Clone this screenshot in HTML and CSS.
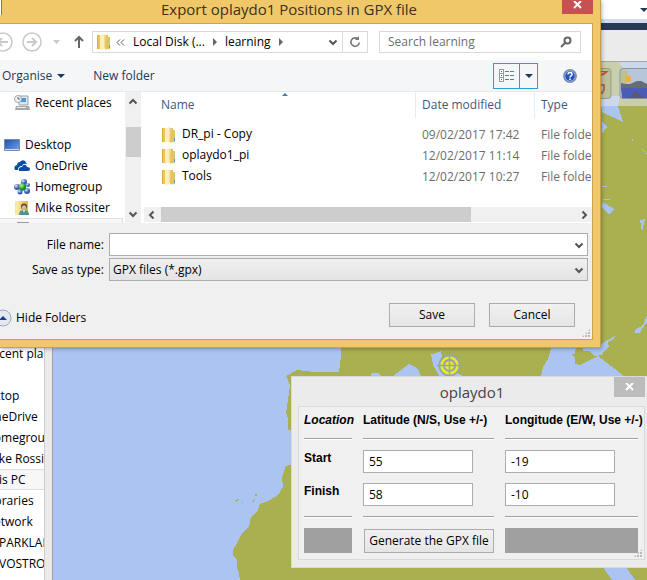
FILE: index.html
```
<!DOCTYPE html>
<html lang="en-GB">
<head>
<meta charset="utf-8">
<title>Export oplaydo1 Positions in GPX file</title>
<link rel="stylesheet" href="styles.css">
</head>
<body>
<svg class="defs" width="0" height="0" aria-hidden="true">
  <defs>
    <linearGradient id="gold" x1="0" x2="1"><stop offset="0" stop-color="#f6e39a"/><stop offset="1" stop-color="#d9b64c"/></linearGradient>
    <linearGradient id="screen" x1="0" x2="1" y2="1"><stop offset="0" stop-color="#1c4fae"/><stop offset="1" stop-color="#6fa5ea"/></linearGradient>
    <radialGradient id="ball" cx=".35" cy=".3"><stop offset="0" stop-color="#dfe8ff"/><stop offset="1" stop-color="#3355b5"/></radialGradient>
    <radialGradient id="green" cx=".35" cy=".3"><stop offset="0" stop-color="#b8f59a"/><stop offset="1" stop-color="#17902a"/></radialGradient>
    <symbol id="folder" viewBox="0 0 16 16">
      <path d="M1 1h6v14H1z" fill="#e4c75f"/><path d="M4 1l5-1v15l-5 1z" fill="#fbf0b8"/><path d="M8 1h4v13H8z" fill="url(#gold)"/><path d="M10 3h4v12l-5 .5z" fill="#e3c463"/><path d="M13 11h1v3h-1z" fill="#3fa0d8"/><path d="M1.500 1v14" stroke="#d6ad43"/>
    </symbol>
    <symbol id="chevron" viewBox="0 0 10 10"><path d="M1.500 3.500L5 7l3.500-3.500" fill="none" stroke="#555" stroke-width="2"/></symbol>
  </defs>
</svg>

<main class="desktop">
  <svg class="map" viewBox="0 0 647 580" preserveAspectRatio="xMinYMin slice" role="img" aria-label="Chart" shape-rendering="crispEdges">
    <rect width="647" height="580" fill="#abc4f1"/>
    <g fill="#a9b050">
      <path d="M341 340V356L339 372H312L307 371 297 370 286 376 290 385 288 400 286 413 288 418V430H300V462L286 466 282 477 283 487 280 492 275 497 268 501 260 504 257 512 251 517 249 526 241 535 237 543 233 550V555L237 560V568L239 573 240 580H647V60H590V340Z"/>
      <path d="M234 500l5-1-3 3zM251 502l4-4-1 4zM255 494h2v2h-2zM242 502h1v1h-1z"/>
    </g>
    <g fill="#abc4f1">
      <path d="M371 376l1-3 6 0 4 3zM393 376l12-9 4-3 6 3 3 2 3 7zM431 354l5-1 5-2 1 5-1 3 4 6 19 12H440l-7-12z"/>
      <path d="M541 376l2-9 5-8 2-7 2-6h24l-1 8-4 0 4 3v7l5 1 18-9 26 20z"/>
      <path d="M583 348l18-4 14-8-1 3-6 3 1 5-4 3-3 5-7 1-6-5-6 0z"/>
      <path d="M600 96h20l-2 10 5 16-21-10zM602 121l5 6-5 7zM602 186h5v1h-5zM603 199h7v1h-7zM603 202l11 7-5 6-7-8zM640 220l5-1-3 13zM635 330l8-5 4-10v7l-5 7-2 4h-5zM642 150l5 5v-1l-5-5zM632 139h1v2h-1z"/>
      <path d="M603 567h23l9 13h-23z"/><path d="M617 60h30v28h-18l-2-15z"/>
    </g>
    <g shape-rendering="auto">
      <circle cx="449.500" cy="365.500" r="10" fill="none" stroke="#91a6ad" stroke-width="2"/>
      <circle cx="449.500" cy="365.500" r="8" fill="none" stroke="#f5e62c" stroke-width="2.500"/>
      <circle cx="449.500" cy="365.500" r="4.500" fill="#f5e62c"/><circle cx="449.500" cy="365.500" r="5.500" fill="none" stroke="#91a6ad" stroke-width="1.500"/>
      <path d="M437 365.500h25M449.500 353v25" stroke="#91a6ad" stroke-width="1.500"/>
    </g>
  </svg>

  <section class="app-chrome" aria-label="Chart toolbar">
    <div class="address-strip"><i class="tri-down"></i></div>
    <div class="navy-strip"></div>
    <div class="plain-strip"></div>
    <div class="chart-tools">
      <svg width="17" height="31" viewBox="0 0 17 31"><path d="M0 .5h13q3 0 3 3v24q0 3-3 3H0" fill="#bcc09a" stroke="#999d8c"/><path d="M0 3h14l-5 4-9 2z" fill="#c8512e"/><path d="M0 5l10-1-8 4z" fill="#f0c09a"/><path d="M0 17h9v5l-2 3H0" fill="none" stroke="#b5655c" stroke-width="2"/></svg>
      <svg width="28" height="31" viewBox="0 0 28 31"><path d="M28 .5H4q-3 0-3 3v24q0 3 3 3h24" fill="#b7c6d9" stroke="#8b91a0"/><path d="M2 2h6l2 9-4 7H2z" fill="#bec18f"/><circle cx="9" cy="11" r="3" fill="#f2b02c"/><path d="M2 15l5 1 4 0 7-3 4 0 6 3v6H2z" fill="#666c75"/><path d="M2 20h26v10H3z" fill="#4b5cb8"/><path d="M10 30l7-7 9 7z" fill="#58597a"/></svg>
    </div>
  </section>

  <section class="back-window" aria-label="Folders">
    <ul>
      <li>Recent places</li><li></li><li class="root">Desktop</li><li>OneDrive</li><li>Homegroup</li><li>Mike Rossiter</li><li class="selected">This PC</li><li>Libraries</li><li>Network</li><li class="host">PARKLANDS</li><li class="host">VOSTRO8200</li>
    </ul>
  </section>

  <section class="dialog" aria-labelledby="export-title">
    <header class="titlebar"><i class="app-icon"></i><h1 id="export-title">Export oplaydo1 Positions in GPX file</h1>
      <button class="close" aria-label="Close"><svg width="9" height="8" viewBox="0 0 9 8"><path d="M1 0l7 7M8 0L1 7" stroke="#fff" stroke-width="2"/></svg></button></header>
    <div class="client">
      <nav class="navbar">
        <svg class="history" width="88" height="22" viewBox="0 0 88 22" fill="none" stroke="#c9c9c9" stroke-width="1.500">
          <circle cx="3" cy="11" r="9"/><path d="M8 11H-1M2 7l-4 4 4 4" stroke-width="2"/><circle cx="32" cy="11" r="9"/><path d="M27 11h9M32 7l4 4-4 4" stroke-width="2"/><path d="M53 9h7l-3.500 4z" fill="#c9c9c9" stroke="none"/><path d="M79 17V6M75 10l4-4 4 4" stroke="#666" stroke-width="2"/>
        </svg>
        <div class="crumbs">
          <svg width="16" height="16"><use href="#folder"/></svg><svg class="more" width="9" height="7" viewBox="0 0 9 7"><path d="M4 .5l-3 3 3 3M8 .5l-3 3 3 3" fill="none" stroke="#555"/></svg>
          <a href="#disk">Local Disk (...</a><i class="tri-right"></i><a href="#learning">learning</a><i class="tri-right"></i>
          <button class="bare drop" aria-label="Previous locations"><svg width="10" height="10"><use href="#chevron"/></svg></button>
          <button class="bare refresh" aria-label="Refresh"><svg width="12" height="14" viewBox="0 0 12 14"><path d="M9 4a4.200 4.200 0 1 0 1.300 3.500" fill="none" stroke="#777" stroke-width="1.600"/><path d="M6 5h4V1z" fill="#777"/></svg></button>
        </div>
        <label class="search"><input type="text" placeholder="Search learning" aria-label="Search learning"><svg width="12" height="12" viewBox="0 0 12 12"><circle cx="7.500" cy="4.500" r="3" fill="none" stroke="#666" stroke-width="2"/><path d="M5 7L1 11" stroke="#666" stroke-width="2"/></svg></label>
      </nav>
      <div class="toolbar">
        <button class="bare organise">Organise<i class="tri-down"></i></button>
        <button class="bare">New folder</button>
        <div class="view">
          <button class="bare" aria-label="Details view"><svg width="16" height="14" viewBox="0 0 16 14" shape-rendering="crispEdges"><g fill="#fff" stroke="#8d9aab"><path d="M.5 .5h4v4h-4zM.5 4.500h4v4h-4zM.5 8.500h4v4h-4z"/></g><path d="M2 2h1v1H2zM2 10h1v1H2z" fill="#277"/><path d="M2 6h1v1H2z" fill="#e22"/><path d="M6 2.500h4M11 2.500h4M6 6.500h4M11 6.500h4M6 10.500h4M11 10.500h4" stroke="#6b7686"/></svg></button>
          <button class="bare" aria-label="More views"><i class="tri-down"></i></button>
        </div>
        <button class="bare help" aria-label="Help"><svg width="14" height="14" viewBox="0 0 14 14"><circle cx="7" cy="7" r="6.300" fill="#2451bd" stroke="#8590a4" stroke-width="1.200"/><circle cx="7" cy="7" r="5.200" fill="none" stroke="#b9caf0" stroke-width=".8"/><path d="M5 5.500q0-2 2-2t2 1.700q0 1-1 1.600T7 8.500" fill="none" stroke="#fff" stroke-width="1.500"/><path d="M6.200 9.600h1.600v1.500H6.200z" fill="#fff"/></svg></button>
      </div>
      <div class="panes">
        <ul class="tree">
          <li><svg width="16" height="16" viewBox="0 0 16 16"><path d="M5 1h9v9H5z" fill="#dfe6ec" stroke="#99a3ad"/><path d="M7 3h5v4H7z" fill="#4a9bd2"/><path d="M2 11h13l1 4H1z" fill="#a5a8ab"/><path d="M3 12h9v1H3z" fill="#eee"/><circle cx="4" cy="4" r="3.500" fill="#f4f6f8" stroke="#9aa6b4"/><path d="M4 2v2h2" stroke="#567" fill="none"/></svg>Recent places</li>
          <li></li>
          <li class="root"><svg width="16" height="16" viewBox="0 0 16 16"><path d="M.5 2.500h15v11H.5z" fill="url(#screen)" stroke="#7c8b9c"/><path d="M1 12h14v1H1z" fill="#cfdbe8"/></svg>Desktop</li>
          <li><svg width="16" height="16" viewBox="0 0 16 16" fill="#0f4ca5"><path d="M1 12Q-1 8 3 7q0-3 3-3 2-3 5-1l2 3q-4-1-5 2-4 0-4 4z"/><path d="M5 13q-1-4 3-4 1-3 4-2l1 2q3 0 3 2t-2 2z"/></svg>OneDrive</li>
          <li><svg width="16" height="16" viewBox="0 0 16 16"><circle cx="3" cy="8" r="3" fill="url(#ball)"/><circle cx="10" cy="3" r="3" fill="url(#ball)"/><circle cx="14" cy="6" r="2" fill="url(#ball)"/><circle cx="6" cy="13" r="2.500" fill="url(#ball)"/><circle cx="13" cy="12" r="3" fill="url(#ball)"/><circle cx="8.500" cy="8" r="3.800" fill="url(#green)"/></svg>Homegroup</li>
          <li><svg width="16" height="16" viewBox="0 0 16 16"><path d="M1 1h4v14H1z" fill="#f8eaa2"/><path d="M4 1h10v14H4z" fill="url(#gold)"/><circle cx="10" cy="6.500" r="3" fill="#5d4632"/><circle cx="10" cy="7.500" r="2.200" fill="#e2b596"/><path d="M5 15q0-5 5-5t5 5z" fill="#48968b"/><path d="M9 10h2l-1 3z" fill="#fff"/></svg>Mike Rossiter</li>
          <li class="selected"><svg width="16" height="16" viewBox="0 0 16 16"><path d="M3 1h12v9H3z" fill="#9b9b9b"/></svg></li>
        </ul>
        <div class="vscroll"><svg class="flip" width="10" height="10"><use href="#chevron"/></svg><i class="vthumb"></i><svg width="10" height="10"><use href="#chevron"/></svg></div>
        <div class="files">
          <i class="sort-mark"></i>
          <table>
            <colgroup><col class="c-name"><col class="c-date"><col></colgroup>
            <thead><tr><th>Name</th><th>Date modified</th><th>Type</th></tr></thead>
            <tbody>
              <tr><td><svg width="16" height="16"><use href="#folder"/></svg>DR_pi - Copy</td><td>09/02/2017 17:42</td><td>File folder</td></tr>
              <tr><td><svg width="16" height="16"><use href="#folder"/></svg>oplaydo1_pi</td><td>12/02/2017 11:14</td><td>File folder</td></tr>
              <tr><td><svg width="16" height="16"><use href="#folder"/></svg>Tools</td><td>12/02/2017 10:27</td><td>File folder</td></tr>
            </tbody>
          </table>
          <div class="hscroll"><svg class="left" width="10" height="10"><use href="#chevron"/></svg><i class="hthumb"></i><svg class="right" width="10" height="10"><use href="#chevron"/></svg></div>
        </div>
      </div>
      <form class="fields">
        <label for="fname">File name:</label>
        <div class="combo"><input id="fname" type="text"><svg width="10" height="10"><use href="#chevron"/></svg></div>
        <label for="ftype">Save as type:</label>
        <div class="combo grey"><select id="ftype"><option>GPX files (*.gpx)</option></select><svg width="10" height="10"><use href="#chevron"/></svg></div>
      </form>
      <footer class="actions">
        <button class="bare hide-folders"><svg width="12" height="18" viewBox="0 0 12 18"><circle cx="3" cy="9" r="8" fill="#e4e9f0" stroke="#9aa8c0"/><path d="M-1 11h8L3 7z" fill="#1f3c88"/></svg>Hide Folders</button>
        <button class="push">Save</button>
        <button class="push">Cancel</button>
      </footer>
      <i class="grip"></i>
    </div>
  </section>

  <section class="tool-window" aria-labelledby="tool-title">
    <header><h2 id="tool-title">oplaydo1</h2><button class="close" aria-label="Close oplaydo1"><svg width="9" height="8" viewBox="0 0 9 8"><path d="M1 0l7 7M8 0L1 7" stroke="#fff" stroke-width="2"/></svg></button></header>
    <form class="panel">
      <em>Location</em><b>Latitude (N/S, Use +/-)</b><b>Longitude (E/W, Use +/-)</b>
      <hr><hr><hr>
      <b class="row-name">Start</b><input type="text" value="55" aria-label="Start latitude"><input type="text" value="-19" aria-label="Start longitude">
      <b class="row-name">Finish</b><input type="text" value="58" aria-label="Finish latitude"><input type="text" value="-10" aria-label="Finish longitude">
      <hr><hr><hr>
      <span class="block"></span><button class="push" type="button">Generate the GPX file</button><span class="block"></span>
      <i class="grip"></i>
    </form>
  </section>
</main>
</body>
</html>
```
FILE: styles.css
```
* { box-sizing: border-box; }

body {
  margin: 0;
  font: 12px/16px "Open Sans", "Noto Sans", sans-serif;
  color: #000;
}

h1, h2, ul { margin: 0; padding: 0; font-weight: 400; list-style: none; }
button, input, select { font: inherit; color: inherit; margin: 0; border-radius: 0; }
input, select { min-width: 0; }
svg { flex: none; display: block; }
.defs { position: absolute; }
.bare { padding: 0; border: 0; background: none; }

.desktop { position: relative; height: 100vh; min-height: 580px; overflow: hidden; }
.map { position: absolute; inset: 0; width: 100%; height: 100%; }

.tri-down { border: 4px solid transparent; border-top-color: #1e395b; border-bottom: 0; }
.tri-right { border: 4px solid transparent; border-left-color: #666; border-right: 0; }

/* Strips of the chart plotter behind the dialogs */
.app-chrome { position: absolute; top: 0; left: 0; right: 0; }
.address-strip { display: flex; justify-content: flex-end; align-items: center; height: 19px; background: #fff; }
.address-strip .tri-down { margin-right: -1px; }
.navy-strip { height: 11px; border-top: 4px solid #d3daea; background: #293955; }
.plain-strip { height: 32px; background: #ebebeb; border-bottom: 1px solid #a6a6a6; }
.chart-tools { display: flex; justify-content: flex-end; gap: 7px; height: 44px; padding-top: 6px; background: rgba(225, 228, 232, .6); }

/* Window partly hidden on the left */
.back-window { position: absolute; top: 343px; left: 0; bottom: 0; width: 53px; background: #ebebeb; border-right: 1px solid #a0a0a0; overflow: hidden; }
.back-window ul { width: 45px; height: 100%; overflow: hidden; background: #fff; border-right: 1px solid #ccc; }
.back-window li { height: 21px; line-height: 21px; white-space: nowrap; text-indent: -15px; }
.back-window .root { text-indent: -27px; }
.back-window .host { text-indent: -1px; }
.back-window .selected { line-height: 19px; background: #f7f7f7; border: solid #dedede; border-width: 1px 0; }

/* Save dialog */
.dialog { position: absolute; top: 0; left: 0; right: 46px; padding: 0 7px 7px 0; background: #f0c869; border: solid #c99f4b; border-width: 0 1px 1px 0; box-shadow: 1px 1px 4px rgba(0, 0, 0, .3); }
.titlebar { display: flex; align-items: flex-start; height: 23px; }
.titlebar h1 { flex: 1; padding-left: 14px; font-size: 15px; line-height: 18px; text-align: center; color: #3b3220; }
.app-icon { width: 2px; height: 15px; background: #fff; border-right: 1px solid #777; }
.close { display: flex; justify-content: center; align-items: center; width: 31px; height: 14px; padding: 0 0 4px; border: 0; background: #c75050; }
.client { position: relative; background: #f0f0f0; border: solid #cda14d; border-width: 1px 1px 1px 0; overflow: hidden; }

.navbar { display: flex; align-items: center; gap: 11px; height: 36px; padding: 0 11px 0 0; background: #fff; }
.history { margin-right: -7px; }
.crumbs { flex: 1; display: flex; align-items: center; height: 22px; padding-left: 3px; border: 1px solid #d9d9d9; }
.crumbs a { color: #000; text-decoration: none; white-space: nowrap; }
.crumbs .more { margin: 0 8px 0 4px; }
.crumbs .tri-right { margin: 0 8px; }
.drop { margin-left: auto; padding-right: 4px; }
.refresh { display: flex; align-items: center; justify-content: center; align-self: stretch; width: 25px; border-left: 1px solid #d9d9d9; }
.search { display: flex; align-items: center; width: 202px; height: 22px; padding: 0 8px; border: 1px solid #d9d9d9; }
.search input { flex: 1; padding: 0; border: 0; outline: 0; }
.search input::placeholder { color: #6d6d6d; }

.toolbar { display: flex; align-items: center; height: 32px; padding: 0 15px 0 2px; color: #1e395b; background: #f5f6f7; border-bottom: 1px solid #e6e8ea; }
.organise { display: flex; align-items: center; gap: 5px; margin-right: 28px; }
.view { display: flex; height: 26px; margin: 0 25px 0 auto; border: 1px solid #2aa0d8; }
.view button { display: flex; align-items: center; justify-content: center; width: 25px; }
.view button + button { width: 18px; border-left: 1px solid #2aa0d8; }

.panes { display: flex; height: 131px; background: #fff; }
.tree { width: 125px; height: 131px; overflow: hidden; }
.tree li { display: flex; align-items: center; gap: 5px; height: 21px; padding-left: 14px; white-space: nowrap; }
.tree .root { padding-left: 4px; }
.tree .selected { margin-right: 2px; border: 1px solid #dedede; border-left: 0; background: #f7f7f7; }
.vscroll { display: flex; flex-direction: column; align-items: center; width: 16px; padding: 5px 0 4px; background: #f0f0f0; }
.vthumb { width: 15px; height: 30px; margin: 20px 0 auto; background: #cdcdcd; }
.flip { transform: rotate(180deg); }
.left { transform: rotate(90deg); }
.right { transform: rotate(-90deg); }

.files { flex: 1; min-width: 0; display: flex; flex-direction: column; position: relative; margin-left: 3px; }
.files table { width: 100%; border-spacing: 0; table-layout: fixed; }
.files th, .files td { height: 21px; padding: 0 0 0 6px; font-weight: 400; text-align: left; white-space: nowrap; overflow: hidden; color: #6d6d6d; }
.files th { height: 26px; color: #43577d; border-right: 1px solid #e3edf8; }
.files th:last-child { border: 0; }
.files th:first-child, .files td:first-child { padding-left: 17px; }
.files td:first-child { color: #000; }
.files tbody::before { content: ""; display: block; height: 6px; }
.files td svg { display: inline-block; margin-right: 5px; vertical-align: middle; }
.c-name { width: 272px; }
.c-date { width: 119px; }
.sort-mark { position: absolute; top: 1px; left: 138px; border: 3px solid transparent; border-bottom-color: #3b7fa5; border-top: 0; }
.hscroll { display: flex; align-items: center; height: 15px; margin-top: auto; margin-bottom: 1px; padding: 0 3px; background: #f0f0f0; }
.hthumb { width: 310px; height: 15px; margin: 0 auto 0 4px; background: #cdcdcd; }

.fields { display: grid; grid-template-columns: 104px 1fr; column-gap: 5px; row-gap: 2px; align-items: center; padding: 10px 4px 0 0; }
.fields label { text-align: right; }
.combo { position: relative; display: flex; height: 23px; border: 1px solid #abadb3; background: #fff; }
.combo.grey { background: linear-gradient(#f0f0f0, #e4e4e4); }
.combo input, .combo select { flex: 1; padding: 0 3px; border: 0; outline: 0; background: none; appearance: none; }
.combo svg { position: absolute; top: 6px; right: 3px; pointer-events: none; }

.actions { display: flex; align-items: center; gap: 14px; padding: 22px 17px 12px 0; }
.hide-folders { display: flex; align-items: center; gap: 4px; margin: 6px auto 0 0; }
.push { width: 86px; height: 24px; padding: 0; border: 1px solid #acacac; background: linear-gradient(#f1f1f1, #e5e5e5); white-space: nowrap; }
.grip { position: absolute; right: 2px; bottom: 2px; width: 8px; height: 8px; background: repeating-linear-gradient(90deg, #bbb 0 2px, transparent 2px 3px); -webkit-mask: repeating-linear-gradient(#000 0 2px, transparent 2px 3px); clip-path: polygon(100% 0, 100% 100%, 0 100%); }

/* Plug-in window */
.tool-window { position: absolute; top: 376px; left: 291px; right: 0; padding: 0 2px 7px 6px; background: #ebebeb; border: 1px solid #d9d9d9; border-right: 0; }
.tool-window header { display: flex; align-items: flex-start; height: 29px; }
.tool-window h2 { flex: 1; padding: 5px 0 0 32px; font-size: 15px; line-height: 20px; text-align: center; color: #444; }
.tool-window .close { height: 20px; padding: 0; background: #bcbcbc; }
.panel { position: relative; display: grid; grid-template-columns: 48px 131px minmax(0, 1fr); column-gap: 11px; grid-template-rows: 25px 17px 33px 28px 17px 31px; padding: 1px 6px 0 5px; border: 1px solid #d9d9d9; background: #f0f0f0; }
.panel b, .panel em { padding-top: 4px; font: bold 12px/16px "Liberation Sans", Arial, sans-serif; white-space: nowrap; }
.panel em { font-style: italic; }
.panel .row-name { padding-top: 0; }
.panel hr { width: 100%; height: 2px; margin: 5px 0 0; border: 0; border-top: 1px solid #a0a0a0; border-bottom: 1px solid #fff; }
.panel input { width: 110px; height: 23px; padding: 0 5px; border: 1px solid #abadb3; background: #fff; outline: 0; }
.panel .push { width: 130px; margin: 1px 0 0 1px; }
.block { height: 25px; background: #a0a0a0; }
```
